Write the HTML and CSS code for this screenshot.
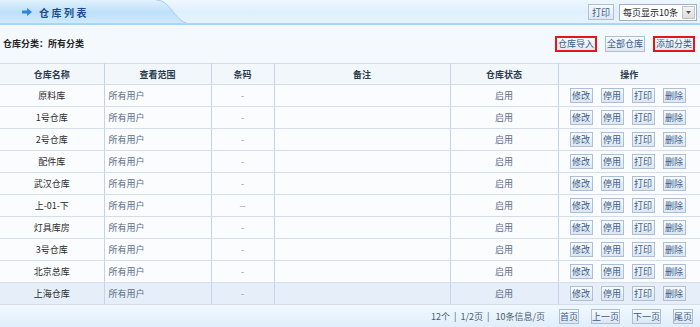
FILE: index.html
```html
<!DOCTYPE html>
<html lang="zh-CN">
<head>
    <meta charset="UTF-8" />
    <title>仓库列表</title>
    <link rel="stylesheet" href="styles.css">
</head>
<body>
<div class="topbar">
    <!-- decorative tab shape behind the title -->
    <svg class="topbar-bg" width="700" height="25" viewBox="0 0 700 25">
        <defs>
            <linearGradient id="tabFill" x1="0" y1="0" x2="0" y2="1">
                <stop offset="0" stop-color="#e2f1fd" />
                <stop offset="0.5" stop-color="#bde0fa" />
                <stop offset="1" stop-color="#d2eafc" />
            </linearGradient>
            <linearGradient id="barFill" x1="0" y1="0" x2="0" y2="1">
                <stop offset="0" stop-color="#eef7fe" />
                <stop offset="0.5" stop-color="#dfeffc" />
                <stop offset="1" stop-color="#e8f4fd" />
            </linearGradient>
        </defs>
        <rect x="0" y="0" width="700" height="24" fill="url(#barFill)" />
        <path d="M0 0 H156 C172 0 174 24 192 24 H0 Z" fill="url(#tabFill)" />
        <path d="M156 0 C172 0 174 24 192 24" fill="none" stroke="#9fcdf3" stroke-width="1" />
        <rect x="0" y="23" width="700" height="2" fill="#aad6f6" />
    </svg>
    <div class="title">
        <svg class="title-icon" width="10" height="8" viewBox="0 0 10 8">
            <path d="M0 2.5 H5 V0 L10 4 L5 8 V5.5 H0 Z" fill="#2f86d6" />
        </svg>
        <span>仓库列表</span>
    </div>
    <div class="top-tools">
        <button class="btn" type="button">打印</button>
        <div class="page-size">
            <span>每页显示10条</span>
            <span class="page-size-arrow">
                <svg width="5" height="3" viewBox="0 0 5 3"><path d="M0 0 H5 L2.5 3 Z" fill="#555" /></svg>
            </span>
        </div>
    </div>
</div>

<div class="filter">
    <div class="filter-label">仓库分类：所有分类</div>
    <div class="filter-tools">
        <button class="btn btn-mark" type="button">仓库导入</button>
        <button class="btn" type="button">全部仓库</button>
        <button class="btn btn-mark" type="button">添加分类</button>
    </div>
</div>

<table class="list">
    <colgroup>
        <col style="width:104px">
        <col style="width:107px">
        <col style="width:63px">
        <col style="width:176px">
        <col style="width:108px">
        <col style="width:142px">
    </colgroup>
    <thead>
    <tr>
        <th>仓库名称</th>
        <th>查看范围</th>
        <th>条码</th>
        <th>备注</th>
        <th>仓库状态</th>
        <th>操作</th>
    </tr>
    </thead>
    <tbody>
    <tr><td class="name">原料库</td><td class="scope">所有用户</td><td class="code">-</td><td></td><td class="state">启用</td><td class="ops"><button class="btn">修改</button><button class="btn">停用</button><button class="btn">打印</button><button class="btn">删除</button></td></tr>
    <tr><td class="name">1号仓库</td><td class="scope">所有用户</td><td class="code">-</td><td></td><td class="state">启用</td><td class="ops"><button class="btn">修改</button><button class="btn">停用</button><button class="btn">打印</button><button class="btn">删除</button></td></tr>
    <tr><td class="name">2号仓库</td><td class="scope">所有用户</td><td class="code">-</td><td></td><td class="state">启用</td><td class="ops"><button class="btn">修改</button><button class="btn">停用</button><button class="btn">打印</button><button class="btn">删除</button></td></tr>
    <tr><td class="name">配件库</td><td class="scope">所有用户</td><td class="code">-</td><td></td><td class="state">启用</td><td class="ops"><button class="btn">修改</button><button class="btn">停用</button><button class="btn">打印</button><button class="btn">删除</button></td></tr>
    <tr><td class="name">武汉仓库</td><td class="scope">所有用户</td><td class="code">-</td><td></td><td class="state">启用</td><td class="ops"><button class="btn">修改</button><button class="btn">停用</button><button class="btn">打印</button><button class="btn">删除</button></td></tr>
    <tr><td class="name">上-01-下</td><td class="scope">所有用户</td><td class="code">--</td><td></td><td class="state">启用</td><td class="ops"><button class="btn">修改</button><button class="btn">停用</button><button class="btn">打印</button><button class="btn">删除</button></td></tr>
    <tr><td class="name">灯具库房</td><td class="scope">所有用户</td><td class="code">-</td><td></td><td class="state">启用</td><td class="ops"><button class="btn">修改</button><button class="btn">停用</button><button class="btn">打印</button><button class="btn">删除</button></td></tr>
    <tr><td class="name">3号仓库</td><td class="scope">所有用户</td><td class="code">-</td><td></td><td class="state">启用</td><td class="ops"><button class="btn">修改</button><button class="btn">停用</button><button class="btn">打印</button><button class="btn">删除</button></td></tr>
    <tr><td class="name">北京总库</td><td class="scope">所有用户</td><td class="code">-</td><td></td><td class="state">启用</td><td class="ops"><button class="btn">修改</button><button class="btn">停用</button><button class="btn">打印</button><button class="btn">删除</button></td></tr>
    <tr class="current"><td class="name">上海仓库</td><td class="scope">所有用户</td><td class="code">-</td><td></td><td class="state">启用</td><td class="ops"><button class="btn">修改</button><button class="btn">停用</button><button class="btn">打印</button><button class="btn">删除</button></td></tr>
    </tbody>
</table>

<div class="pager">
    <span class="pager-info">12个 &nbsp;| &nbsp;1/2页 &nbsp;| &nbsp;&nbsp;10条信息/页</span>
    <div class="pager-tools">
        <button class="btn" type="button">首页</button>
        <button class="btn" type="button">上一页</button>
        <button class="btn" type="button">下一页</button>
        <button class="btn" type="button">尾页</button>
    </div>
</div>
</body>
</html>
```

FILE: styles.css
```css
* {
    box-sizing: border-box;
}

body {
    margin: 0;
    width: 700px;
    height: 327px;
    overflow: hidden;
    background: #f4f9fe;
    font-family: 'Noto Sans CJK SC', 'DejaVu Sans', sans-serif;
    font-size: 9px;
    color: #333;
}

/* Top bar */
.topbar {
    position: relative;
    height: 25px;
    display: flex;
    justify-content: space-between;
    align-items: center;
    padding: 0 3px 1px 22px;
}

.topbar-bg {
    position: absolute;
    left: 0;
    top: 0;
    z-index: 0;
}

.title,
.top-tools {
    position: relative;
    z-index: 1;
    display: flex;
    align-items: center;
}

.title {
    color: #1d4c8e;
    font-size: 10px;
    font-weight: 700;
    letter-spacing: 2.5px;
}

.title-icon {
    margin-right: 7px;
}

.top-tools {
    gap: 5px;
}

.top-tools .btn {
    height: 16px;
    padding: 0 3px;
}

.page-size {
    display: flex;
    align-items: center;
    justify-content: space-between;
    width: 78px;
    height: 17px;
    padding: 0 1px 0 3px;
    background: #fff;
    border: 1px solid #9fb3c9;
    font-size: 9px;
    color: #222;
    white-space: nowrap;
}

.page-size-arrow {
    display: flex;
    align-items: center;
    justify-content: center;
    width: 13px;
    height: 13px;
    background: linear-gradient(#f4f4f4, #dcdcdc);
    border: 1px solid #c4c4c4;
}

/* Buttons */
.btn {
    height: 15px;
    padding: 0 2px;
    font-family: inherit;
    font-size: 9px;
    line-height: 1;
    color: #3a5c8c;
    background: linear-gradient(#f7fafd, #dce7f3);
    border: 1px solid #aebfd4;
    border-radius: 0;
    white-space: nowrap;
    cursor: pointer;
}

.btn-mark {
    border: 2px solid #e3161c;
    background: linear-gradient(#f7fafd, #e3ebf5);
}

/* Filter bar */
.filter {
    height: 38px;
    display: flex;
    justify-content: space-between;
    align-items: center;
    padding: 0 5px 1px 3px;
}

.filter-label {
    font-weight: 700;
    color: #222;
}

.filter-tools {
    display: flex;
    gap: 8px;
}

.filter-tools .btn {
    height: 16px;
    padding: 0 1px;
}

/* Table */
.list {
    width: 700px;
    border-collapse: collapse;
    table-layout: fixed;
}

.list th,
.list td {
    height: 22px;
    padding: 0;
    border: 1px solid #d4deea;
    border-left-color: #c6d3e4;
    border-right-color: #c6d3e4;
    text-align: center;
    white-space: nowrap;
}

.list tr > :first-child {
    border-left: none;
}

.list tr > :last-child {
    border-right: none;
}

.list th {
    height: 21px;
    background: #f2f7fc;
    font-weight: 700;
    color: #2b3a4e;
}

.list td {
    background: #fafcfe;
}

.list .current td {
    background: #e6eff9;
}

.list td.name {
    color: #2a2a2a;
}

.list td.scope {
    text-align: left;
    padding-left: 4px;
    color: #5a6b86;
}

.list td.code {
    color: #8794a6;
}

.list td.state {
    color: #5a6b86;
}

.list td.ops {
    font-size: 0;
    padding-left: 11px;
    text-align: left;
}

.list td.ops .btn {
    width: 23px;
    margin-right: 8px;
    padding: 0;
    vertical-align: middle;
}

/* Pager */
.pager {
    height: 23px;
    display: flex;
    justify-content: flex-end;
    align-items: center;
    padding: 0 7px 0 0;
    background: linear-gradient(#f1f8fe, #dfeefb);
    color: #4a5a70;
}

.pager-info {
    margin-right: 14px;
}

.pager-tools {
    display: flex;
    gap: 12px;
}

.pager-tools .btn {
    padding: 0;
}
```
